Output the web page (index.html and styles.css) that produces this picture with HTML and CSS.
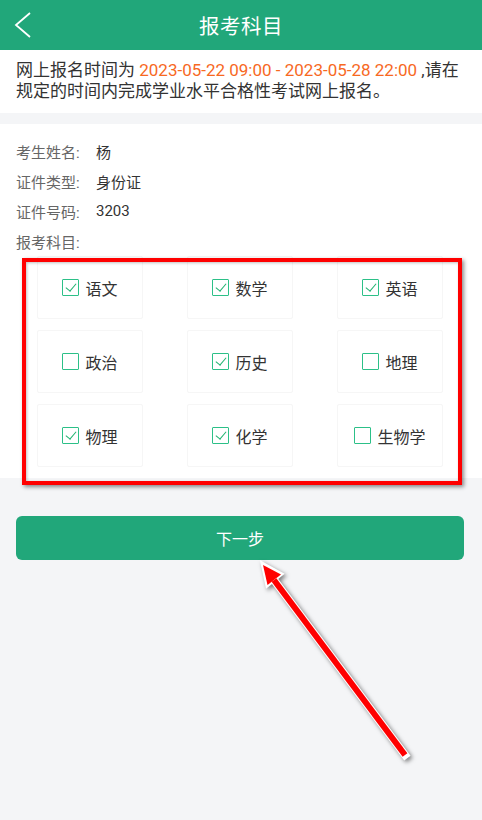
FILE: index.html
```html
<!DOCTYPE html>
<html lang="zh-CN">
<head>
<meta charset="utf-8">
<title>报考科目</title>
<link rel="stylesheet" href="styles.css">
</head>
<body>
<div class="page">
  <header class="topbar">
    <svg class="back" width="20" height="30" viewBox="0 0 20 30"><path d="M16 1 L2 13 L16 25" fill="none" stroke="#fff" stroke-width="1.8"/></svg>
    <h1 class="title">报考科目</h1>
  </header>
  <section class="notice">网上报名时间为 <span class="date">2023-05-22 09:00 - 2023-05-28 22:00</span> ,请在规定的时间内完成学业水平合格性考试网上报名。</section>
  <section class="info">
    <div class="row"><span class="label">考生姓名:</span><span class="value">杨</span></div>
    <div class="row"><span class="label">证件类型:</span><span class="value">身份证</span></div>
    <div class="row"><span class="label">证件号码:</span><span class="value">3203</span></div>
    <div class="row"><span class="label">报考科目:</span></div>
    <div class="grid">
      <div class="cell"><span class="cb on"></span><span>语文</span></div>
      <div class="cell"><span class="cb on"></span><span>数学</span></div>
      <div class="cell"><span class="cb on"></span><span>英语</span></div>
      <div class="cell"><span class="cb"></span><span>政治</span></div>
      <div class="cell"><span class="cb on"></span><span>历史</span></div>
      <div class="cell"><span class="cb"></span><span>地理</span></div>
      <div class="cell"><span class="cb on"></span><span>物理</span></div>
      <div class="cell"><span class="cb on"></span><span>化学</span></div>
      <div class="cell"><span class="cb"></span><span>生物学</span></div>
    </div>
  </section>
  <div class="actions"><button class="next">下一步</button></div>
  <div class="redbox"></div>
  <svg class="arrow" width="482" height="820" viewBox="0 0 482 820">
    <line x1="274" y1="580" x2="405" y2="755" stroke="#fff" stroke-width="8" stroke-linecap="square"/>
    <polygon points="262,563 282,574 267,586" fill="#fff" stroke="#fff" stroke-width="3" stroke-linejoin="miter"/>
    <line x1="274" y1="580" x2="405" y2="755" stroke="#ff0000" stroke-width="6"/>
    <polygon points="263,565 281,574.5 267.5,585" fill="#ff0000"/>
  </svg>
</div>
</body>
</html>
```
FILE: styles.css
```css
* { box-sizing: border-box; }
html, body { margin: 0; padding: 0; }
body {
  background: #f4f5f7;
  font-family: Roboto, "Noto Sans CJK SC", sans-serif;
  color: #333;
}
.page { position: relative; width: 482px; height: 820px; overflow: hidden; }
.topbar {
  height: 50px;
  background: #21a77a;
  display: flex;
  align-items: center;
  justify-content: center;
  position: relative;
}
.back { position: absolute; left: 14px; top: 12px; }
.title { margin: 0; font-size: 20.5px; font-weight: 400; color: #fff; letter-spacing: 0.5px; }
.notice {
  background: #fff;
  padding: 9.5px 14px 0 16px;
  font-size: 17px;
  line-height: 21px;
  color: #333;
  height: 63px;
}
.date { color: #f7691f; }
.info {
  margin-top: 11px;
  background: #fff;
  padding: 12px 0 11px 0;
}
.row { display: flex; height: 30px; align-items: center; padding-left: 16px; font-size: 15px; }
.label { color: #666; width: 80px; }
.value { color: #333; }
.grid {
  display: grid;
  grid-template-columns: repeat(3, 106px);
  grid-auto-rows: 63px;
  column-gap: 44px;
  row-gap: 11px;
  padding-left: 37px;
}
.cell {
  border: 1px solid #f6f6f6;
  border-radius: 2px;
  display: flex;
  align-items: center;
  justify-content: center;
  gap: 6px;
  font-size: 16px;
  color: #333;
}
.cb {
  width: 17px; height: 17px;
  border: 1.5px solid #2cc088;
  border-radius: 1px;
  position: relative;
  flex: none;
}
.cb.on::after {
  content: "";
  position: absolute;
  left: 4.5px; top: 1px;
  width: 5px; height: 9px;
  border-right: 1.8px solid #1fb36f;
  border-bottom: 1.8px solid #1fb36f;
  transform: rotate(40deg);
}
.actions { padding: 38px 18px 0 16px; }
.next {
  width: 448px;
  height: 44px;
  border: none;
  border-radius: 6px;
  background: #21a77a;
  color: #fff;
  font-family: Roboto, "Noto Sans CJK SC", sans-serif;
  font-size: 16px;
  display: block;
}
.redbox {
  position: absolute;
  left: 22px; top: 258px;
  width: 440px; height: 227px;
  border: 4px solid #ff0000;
  box-shadow: 2px 2px 4px rgba(0,0,0,0.45), inset 1px 1px 3px rgba(0,0,0,0.25);
  pointer-events: none;
}
.arrow {
  position: absolute; left: 0; top: 0;
  pointer-events: none;
  filter: drop-shadow(2px 2px 2px rgba(0,0,0,0.5));
}
```
